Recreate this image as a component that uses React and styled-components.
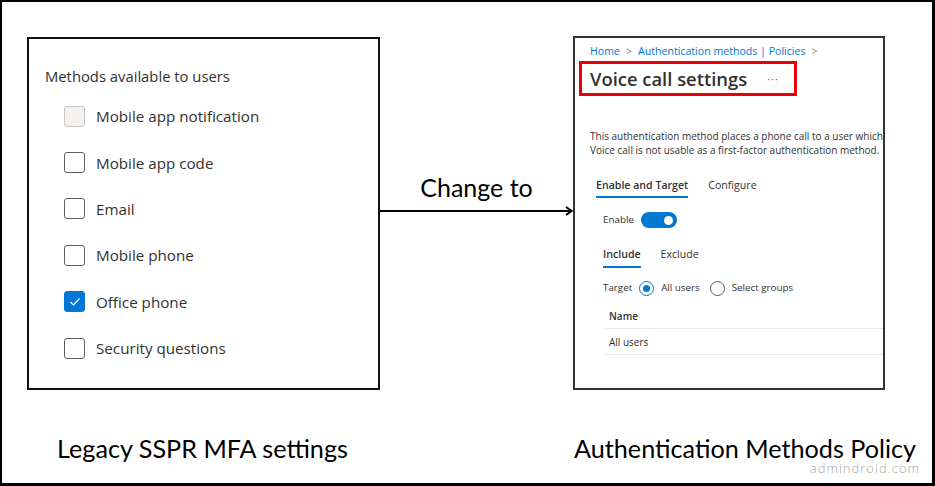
import React from "react";
import styled, { createGlobalStyle } from "styled-components";

const Global = createGlobalStyle`
  html, body { margin: 0; padding: 0; background: #fff; }
  * { box-sizing: border-box; }
`;

const uiFont = `"Segoe UI", "Open Sans", "Noto Sans", sans-serif`;
const capFont = `Lato, "Noto Sans", sans-serif`;

const Frame = styled.div`
  width: 935px;
  height: 486px;
  border: 2px solid #000;
  border-right-width: 3px;
  border-bottom-width: 3px;
  padding: 35px 0 0 25px;
  display: flex;
  flex-direction: column;
  overflow: hidden;
  background: #fff;
`;

const TopRow = styled.div`
  display: flex;
  align-items: flex-start;
`;

const LegacyPanel = styled.div`
  width: 353px;
  height: 353px;
  border: 2px solid #111;
  padding: 27px 0 0 16px;
  font-family: ${uiFont};
  color: #323130;
`;

const PanelHeading = styled.div`
  font-size: 14.8px;
  line-height: 20px;
  margin-bottom: 7px;
`;

const MethodRow = styled.div`
  height: 46.4px;
  display: flex;
  align-items: center;
  gap: 11px;
  padding-left: 19px;
  font-size: 15.2px;
`;

const Box = styled.span`
  width: 21px;
  height: 21px;
  border-radius: 3px;
  border: 1.5px solid ${(p) => (p.$disabled ? "#c8c6c4" : p.$checked ? "#0078d4" : "#605e5c")};
  background: ${(p) => (p.$disabled ? "#f3f2f1" : p.$checked ? "#0078d4" : "#fff")};
  display: flex;
  align-items: center;
  justify-content: center;
  flex: none;
`;

const Middle = styled.div`
  width: 193px;
  padding-top: 135px;
  display: flex;
  flex-direction: column;
  align-items: center;
`;

const ChangeText = styled.div`
  font-family: ${capFont};
  font-size: 25px;
  line-height: 30px;
  color: #000;
  margin-bottom: 4px;
`;

const PolicyPanel = styled.div`
  width: 312px;
  height: 354px;
  margin-top: -1px;
  border: 2px solid #333;
  padding: 6px 0 0 15px;
  overflow: hidden;
  font-family: ${uiFont};
  color: #323130;
  display: flex;
  flex-direction: column;
`;

const Crumbs = styled.div`
  font-size: 10.6px;
  line-height: 15px;
  color: #0078d4;
  display: flex;
  align-items: center;
  gap: 6px;
  white-space: nowrap;
`;

const Chevron = styled.span`
  color: #8a8886;
`;

const TitleHighlight = styled.div`
  margin: 2px 0 0 -11px;
  width: 218px;
  height: 35px;
  border: 3px solid #e8000b;
  padding-left: 8px;
  display: flex;
  align-items: center;
  gap: 20px;
`;

const Title = styled.div`
  font-size: 18.4px;
  font-weight: 600;
  line-height: 29px;
  white-space: nowrap;
`;

const More = styled.span`
  font-size: 11px;
  color: #605e5c;
  letter-spacing: 1px;
`;

const Desc = styled.div`
  margin-top: 33px;
  font-size: 10px;
  line-height: 14px;
  white-space: nowrap;
`;

const Tabs = styled.div`
  display: flex;
  gap: ${(p) => p.$gap}px;
  margin-top: ${(p) => p.$mt}px;
  margin-left: ${(p) => p.$ml}px;
`;

const Tab = styled.div`
  font-size: 10.6px;
  line-height: 16px;
  padding-bottom: ${(p) => p.$pb}px;
  border-bottom: 2px solid ${(p) => (p.$active ? "#0078d4" : "transparent")};
  font-weight: ${(p) => (p.$active ? 600 : 400)};
  white-space: nowrap;
`;

const Row = styled.div`
  display: flex;
  align-items: center;
  margin-top: ${(p) => p.$mt}px;
  margin-left: 13px;
  font-size: 9.8px;
  line-height: 16px;
  gap: ${(p) => p.$gap}px;
  white-space: nowrap;
`;

const Toggle = styled.span`
  width: 36px;
  height: 16px;
  border-radius: 8px;
  background: #0078d4;
  display: flex;
  align-items: center;
  justify-content: flex-end;
  padding-right: 4px;
  &::after {
    content: "";
    width: 9px;
    height: 9px;
    border-radius: 50%;
    background: #fff;
  }
`;

const Radio = styled.span`
  width: 15px;
  height: 15px;
  border-radius: 50%;
  border: 1px solid ${(p) => (p.$on ? "#0078d4" : "#605e5c")};
  display: flex;
  align-items: center;
  justify-content: center;
  margin-right: 7px;
  &::after {
    content: "";
    width: 7px;
    height: 7px;
    border-radius: 50%;
    background: ${(p) => (p.$on ? "#0078d4" : "transparent")};
  }
`;

const RadioLabel = styled.span`
  margin-right: ${(p) => p.$mr}px;
`;

const Table = styled.div`
  margin: 7px 0 0 13px;
  width: 320px;
`;

const TRow = styled.div`
  height: 26px;
  border-bottom: 1px solid #edebe9;
  padding-left: 6px;
  display: flex;
  align-items: center;
  font-size: 10px;
  font-weight: ${(p) => (p.$head ? 600 : 400)};
`;

const BottomRow = styled.div`
  display: flex;
  margin-top: 45px;
`;

const Caption = styled.div`
  font-family: ${capFont};
  font-size: 25.2px;
  line-height: 26px;
  color: #000;
  white-space: nowrap;
`;

const LeftCap = styled.div`
  width: 546px;
  padding-left: 30px;
`;

const RightCap = styled.div`
  width: 347px;
  padding-left: 1px;
  display: flex;
  flex-direction: column;
`;

const Watermark = styled.div`
  align-self: flex-end;
  font-family: ${uiFont};
  font-weight: 300;
  font-size: 13px;
  line-height: 14px;
  letter-spacing: 1px;
  color: #a6a6a6;
`;

const methods = [
  { label: "Mobile app notification", disabled: true },
  { label: "Mobile app code" },
  { label: "Email" },
  { label: "Mobile phone" },
  { label: "Office phone", checked: true },
  { label: "Security questions" },
];

export default function App() {
  return (
    <>
      <Global />
      <Frame>
        <TopRow>
          <LegacyPanel>
            <PanelHeading>Methods available to users</PanelHeading>
            {methods.map((m) => (
              <MethodRow key={m.label}>
                <Box $disabled={m.disabled} $checked={m.checked}>
                  {m.checked && (
                    <svg width="12" height="10" viewBox="0 0 12 10">
                      <polyline points="1.5,5 4.5,8 10.5,1.5" fill="none" stroke="#fff" strokeWidth="1.2" />
                    </svg>
                  )}
                </Box>
                <span>{m.label}</span>
              </MethodRow>
            ))}
          </LegacyPanel>
          <Middle>
            <ChangeText>Change to</ChangeText>
            <svg width="193" height="10" viewBox="0 0 193 10">
              <line x1="0" y1="5" x2="191" y2="5" stroke="#000" strokeWidth="2" />
              <polyline points="186,1 191.5,5 186,9" fill="none" stroke="#000" strokeWidth="2" />
            </svg>
          </Middle>
          <PolicyPanel>
            <Crumbs>
              <span>Home</span>
              <Chevron>&gt;</Chevron>
              <span>Authentication methods | Policies</span>
              <Chevron>&gt;</Chevron>
            </Crumbs>
            <TitleHighlight>
              <Title>Voice call settings</Title>
              <More>···</More>
            </TitleHighlight>
            <Desc>
              This authentication method places a phone call to a user which will be used to
              <br />
              Voice call is not usable as a first-factor authentication method.
            </Desc>
            <Tabs $gap={20} $mt={20} $ml={6}>
              <Tab $active $pb={3}>Enable and Target</Tab>
              <Tab $pb={3}>Configure</Tab>
            </Tabs>
            <Row $mt={14} $gap={7}>
              <span>Enable</span>
              <Toggle />
            </Row>
            <Tabs $gap={20} $mt={18} $ml={13}>
              <Tab $active $pb={4}>Include</Tab>
              <Tab $pb={4}>Exclude</Tab>
            </Tabs>
            <Row $mt={12} $gap={0}>
              <RadioLabel $mr={7}>Target</RadioLabel>
              <Radio $on />
              <RadioLabel $mr={10}>All users</RadioLabel>
              <Radio />
              <RadioLabel $mr={0}>Select groups</RadioLabel>
            </Row>
            <Table>
              <TRow $head>Name</TRow>
              <TRow>All users</TRow>
            </Table>
          </PolicyPanel>
        </TopRow>
        <BottomRow>
          <LeftCap>
            <Caption>Legacy SSPR MFA settings</Caption>
          </LeftCap>
          <RightCap>
            <Caption>Authentication Methods Policy</Caption>
            <Watermark>admindroid.com</Watermark>
          </RightCap>
        </BottomRow>
      </Frame>
    </>
  );
}
